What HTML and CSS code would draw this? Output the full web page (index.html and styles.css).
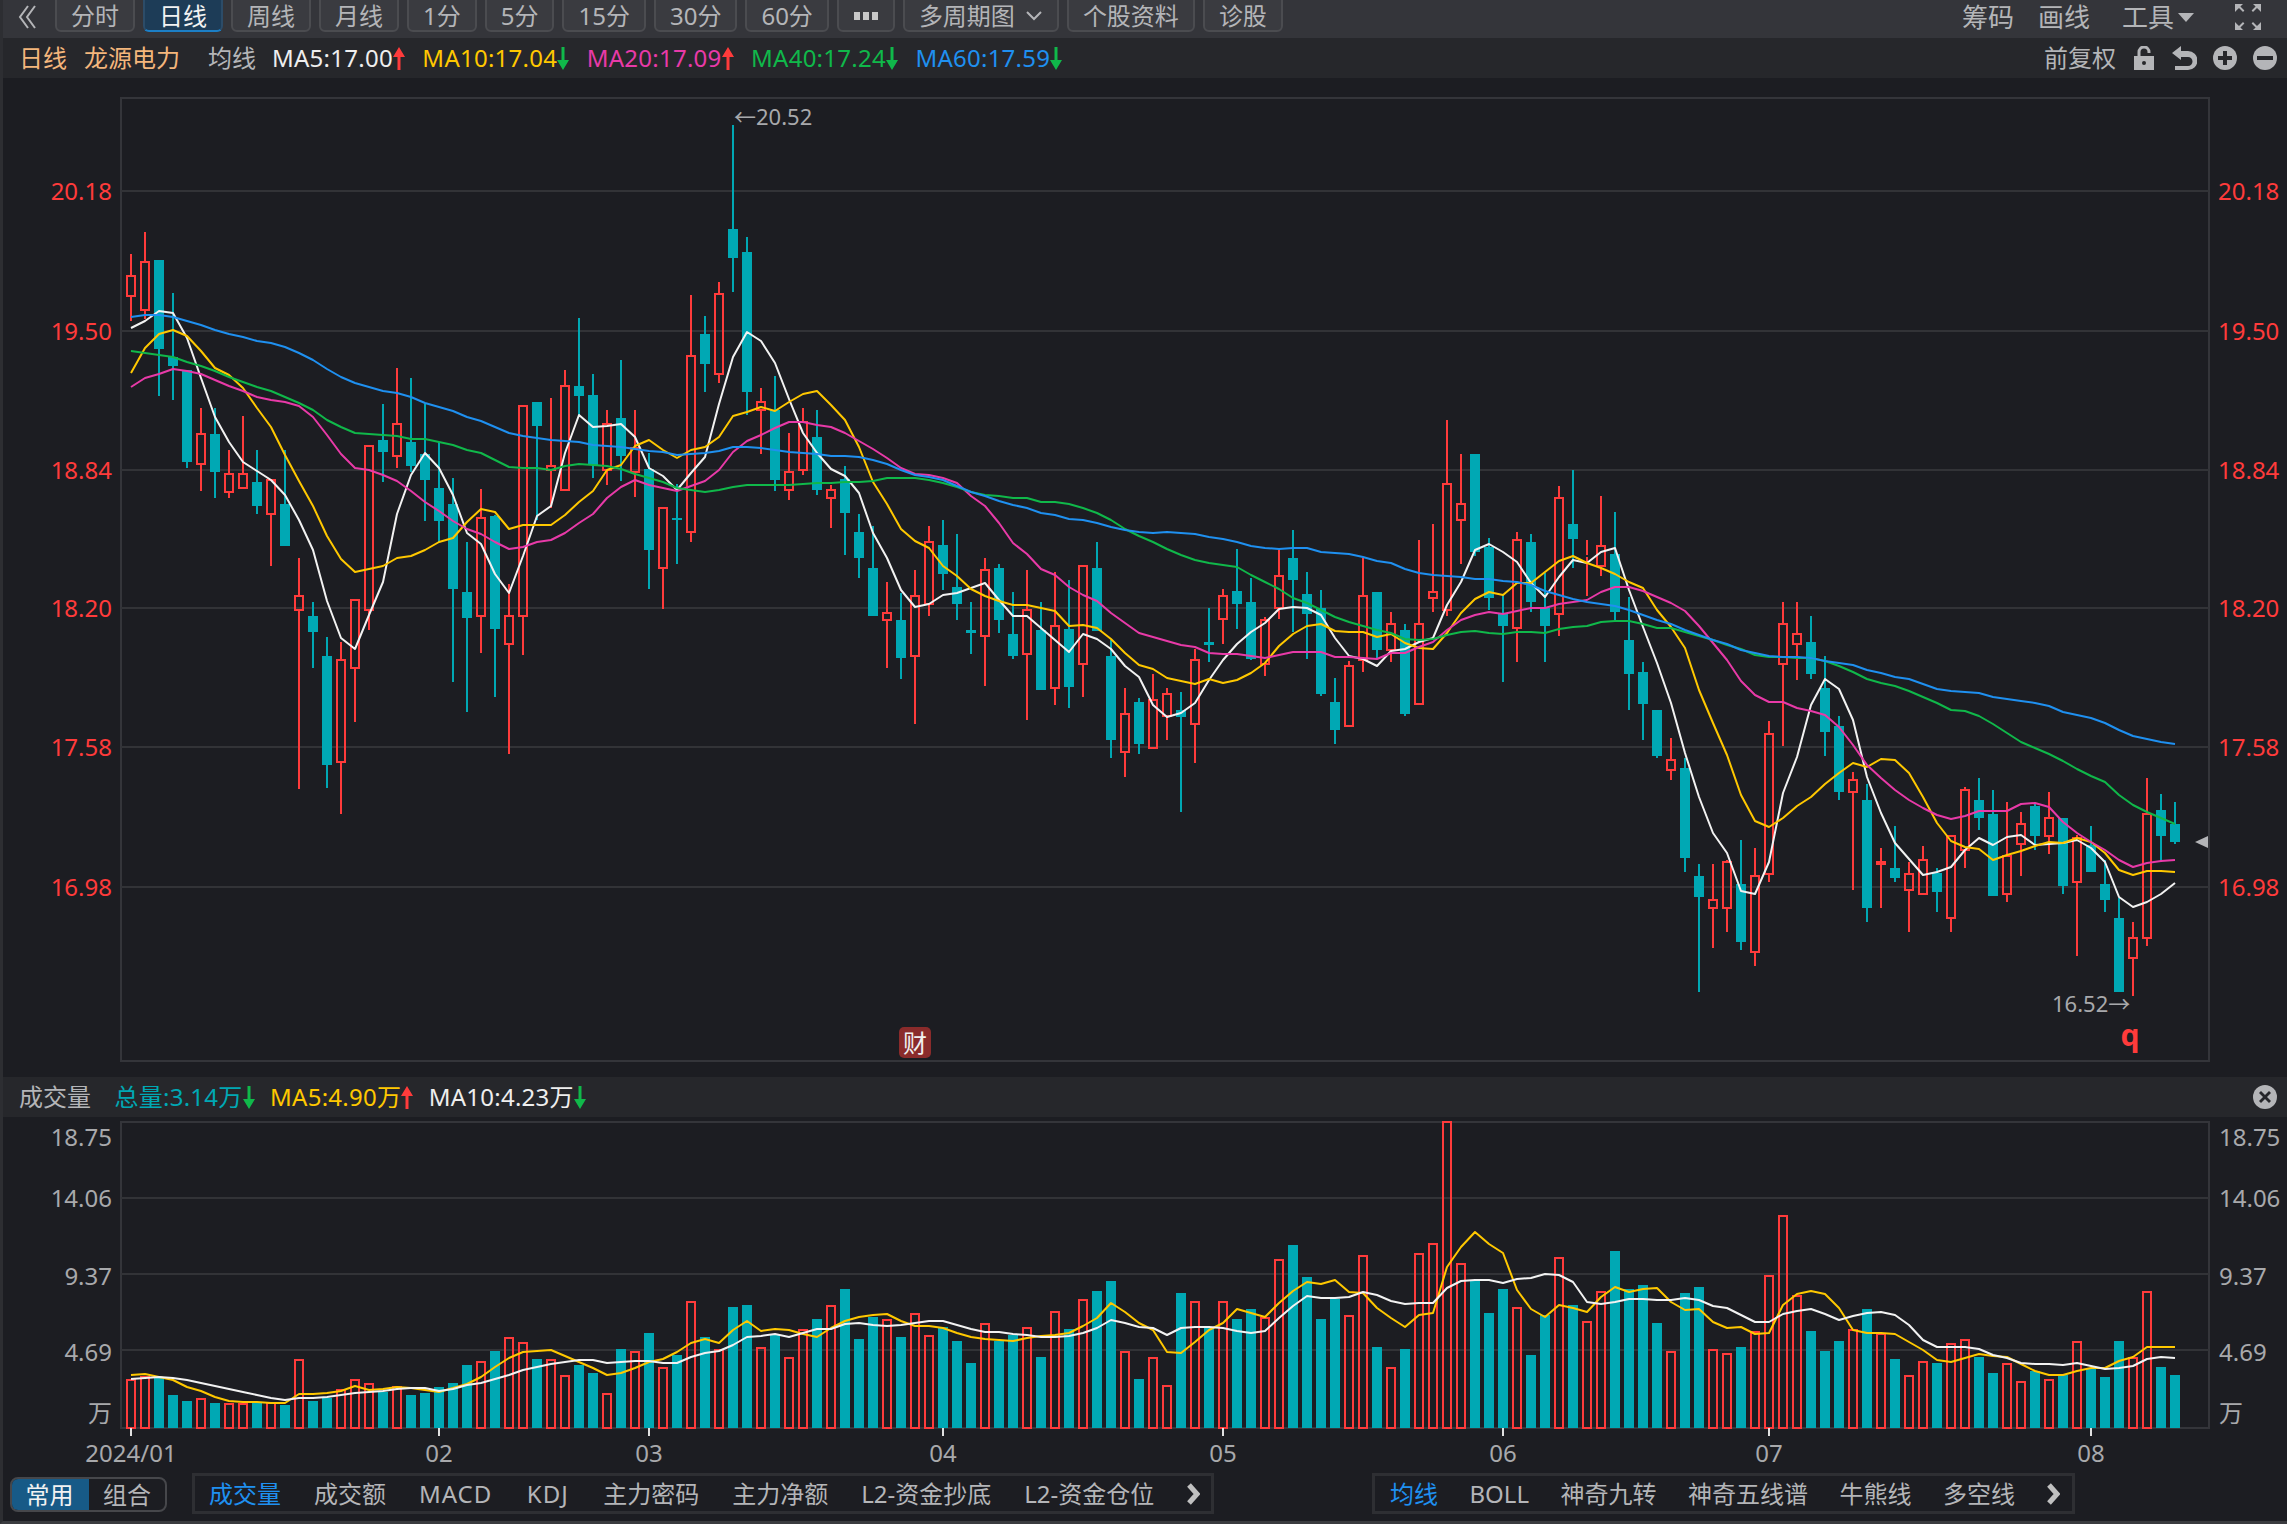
FILE: index.html
```html
<!DOCTYPE html>
<html lang="zh-CN">
  <head>
    <meta charset="UTF-8" />
    <title>龙源电力 日线</title>
    <link rel="stylesheet" href="styles.css">
  </head>
  <body>
    <div class="app">
      <div class="toolbar">
        <svg class="back-icon" viewBox="0 0 20 26">
          <polyline points="10,2 2,13 10,24" />
          <polyline points="17,2 9,13 17,24" />
        </svg>
        <button class="tool-btn">分时</button>
        <button class="tool-btn active">日线</button>
        <button class="tool-btn">周线</button>
        <button class="tool-btn">月线</button>
        <button class="tool-btn">1分</button>
        <button class="tool-btn">5分</button>
        <button class="tool-btn">15分</button>
        <button class="tool-btn">30分</button>
        <button class="tool-btn">60分</button>
        <button class="tool-btn more-btn">
          <svg class="more-icon" viewBox="0 0 24 8">
            <rect x="0" y="0" width="6" height="8" />
            <rect x="9" y="0" width="6" height="8" />
            <rect x="18" y="0" width="6" height="8" />
          </svg>
        </button>
        <button class="tool-btn">
          多周期图
          <svg class="chevron-down" viewBox="0 0 18 12"><polyline points="2,2 9,9 16,2" /></svg>
        </button>
        <button class="tool-btn">个股资料</button>
        <button class="tool-btn">诊股</button>
        <div class="toolbar-right">
          <span class="top-link link-chip">筹码</span>
          <span class="top-link link-draw">画线</span>
          <span class="top-link">工具<i class="caret"></i></span>
          <svg class="fullscreen-icon" viewBox="0 0 28 28">
            <path d="M1 1h8L6.400 3.600l4 4L9 9 5 5 2.400 7.600 1 9zM27 1h-8l2.600 2.600-4 4L19 9l4-4 2.600 2.600L27 9zM1 27h8l-2.600-2.600 4-4L9 19l-4 4-2.600-2.600L1 19zM27 27h-8l2.600-2.600-4-4L19 19l4 4 2.600-2.600L27 19z" />
          </svg>
        </div>
      </div>

      <div class="legend">
        <span class="c-orange first-item">日线</span>
        <span class="c-orange">龙源电力</span>
        <span class="c-grey gap-wide">均线</span>
        <span class="ma-item c-white">MA5:17.00<svg class="arrow up" viewBox="0 0 12 23"><path d="M6 0l6 10H7.500v13h-3V10H0z" /></svg></span>
        <span class="ma-item c-yellow">MA10:17.04<svg class="arrow down" viewBox="0 0 12 23"><path d="M6 23l6-10H7.500V0h-3v13H0z" /></svg></span>
        <span class="ma-item c-pink">MA20:17.09<svg class="arrow up" viewBox="0 0 12 23"><path d="M6 0l6 10H7.500v13h-3V10H0z" /></svg></span>
        <span class="ma-item c-green">MA40:17.24<svg class="arrow down" viewBox="0 0 12 23"><path d="M6 23l6-10H7.500V0h-3v13H0z" /></svg></span>
        <span class="ma-item c-blue">MA60:17.59<svg class="arrow down" viewBox="0 0 12 23"><path d="M6 23l6-10H7.500V0h-3v13H0z" /></svg></span>
        <div class="legend-right">
          <span class="c-grey">前复权</span>
          <svg class="tool-icon lock" viewBox="0 0 20 24">
            <path d="M0 10h20v14H0zM3.500 10V6a6.500 6.500 0 0 1 13 0v1h-3V6a3.500 3.500 0 0 0-7 0v4z" />
            <circle class="hole" cx="10" cy="17" r="2" />
          </svg>
          <svg class="tool-icon undo" viewBox="0 0 25 24">
            <path d="M0 7l9-7v5h7a8.500 8.500 0 0 1 0 19H3v-4h13a4.500 4.500 0 0 0 0-9H9v3z" />
          </svg>
          <svg class="tool-icon round" viewBox="0 0 24 24">
            <circle cx="12" cy="12" r="12" />
            <rect class="hole" x="5" y="10" width="14" height="4" />
            <rect class="hole" x="10" y="5" width="4" height="14" />
          </svg>
          <svg class="tool-icon round" viewBox="0 0 24 24">
            <circle cx="12" cy="12" r="12" />
            <rect class="hole" x="4" y="10" width="16" height="4" />
          </svg>
        </div>
      </div>

      <svg class="price-chart" id="priceChart" viewBox="3 78 2284 999"></svg>

      <div class="legend vol-legend">
        <span class="c-grey vol-title">成交量</span>
        <span class="ma-item c-teal">总量:3.14万<svg class="arrow down" viewBox="0 0 12 23"><path d="M6 23l6-10H7.500V0h-3v13H0z" /></svg></span>
        <span class="ma-item c-yellow">MA5:4.90万<svg class="arrow up" viewBox="0 0 12 23"><path d="M6 0l6 10H7.500v13h-3V10H0z" /></svg></span>
        <span class="ma-item c-white">MA10:4.23万<svg class="arrow down" viewBox="0 0 12 23"><path d="M6 23l6-10H7.500V0h-3v13H0z" /></svg></span>
        <div class="legend-right">
          <svg class="tool-icon round close" viewBox="0 0 24 24">
            <circle cx="12" cy="12" r="12" />
            <path class="hole" d="M8 6l4 4 4-4 2 2-4 4 4 4-2 2-4-4-4 4-2-2 4-4-4-4z" />
          </svg>
        </div>
      </div>

      <svg class="vol-chart" id="volChart" viewBox="3 1117 2284 351"></svg>

      <div class="tabs">
        <div class="switch">
          <span class="switch-on">常用</span>
          <span class="switch-off">组合</span>
        </div>
        <div class="tab-group group-indicators">
          <span class="tab active">成交量</span>
          <span class="tab">成交额</span>
          <span class="tab tab-latin">MACD</span>
          <span class="tab tab-latin">KDJ</span>
          <span class="tab">主力密码</span>
          <span class="tab">主力净额</span>
          <span class="tab">L2-资金抄底</span>
          <span class="tab">L2-资金仓位</span>
          <svg class="chevron" viewBox="0 0 13 22"><polyline points="2,2 10,11 2,20" /></svg>
        </div>
        <div class="tab-group group-overlays">
          <span class="tab active">均线</span>
          <span class="tab">BOLL</span>
          <span class="tab">神奇九转</span>
          <span class="tab">神奇五线谱</span>
          <span class="tab">牛熊线</span>
          <span class="tab">多空线</span>
          <svg class="chevron" viewBox="0 0 13 22"><polyline points="2,2 10,11 2,20" /></svg>
        </div>
      </div>
    </div>
    <script src="chart.js"></script>
  </body>
</html>
```

FILE: styles.css
```css
* {
  margin: 0;
  padding: 0;
  box-sizing: border-box;
}

body {
  width: 2287px;
  height: 1524px;
  overflow: hidden;
  background-color: #1c1d22;
  font-family: "Noto Sans", "Noto Sans CJK SC", sans-serif;
  font-size: 24px;
  color: #b4b5b8;
}

.app {
  width: 2287px;
  height: 1524px;
  border-left: 3px solid #2d2e32;
  border-bottom: 3px solid #3a3b3f;
}

/* top bar */
.toolbar {
  display: flex;
  align-items: flex-start;
  gap: 8px;
  height: 38px;
  overflow: hidden;
  padding-left: 15px;
  background-color: #34353a;
}

.back-icon {
  width: 20px;
  height: 26px;
  margin: 4px 9px 0 0;
}

.back-icon polyline {
  fill: none;
  stroke: #b4b5b8;
  stroke-width: 2;
}

.tool-btn {
  display: flex;
  align-items: center;
  justify-content: center;
  gap: 10px;
  height: 38px;
  margin-top: -6px;
  padding: 6px 14px 0;
  border: 2px solid #4b4c50;
  border-radius: 6px;
  background-color: #3a3b40;
  color: #b4b5b8;
  font-family: inherit;
  font-size: 24px;
  line-height: 1;
}

.tool-btn.active {
  background-color: #1d3c57;
  border-color: #2c4c68;
  border-bottom-color: #1c7fc6;
  color: #f2f2f2;
}

.more-btn {
  width: 58px;
}

.more-icon {
  width: 24px;
  height: 8px;
  fill: #c8c8c8;
}

.chevron-down {
  width: 18px;
  height: 12px;
  fill: none;
  stroke: #b4b5b8;
  stroke-width: 2;
}

.toolbar-right {
  display: flex;
  align-items: center;
  height: 34px;
  margin-left: auto;
  padding-right: 25px;
}

.top-link {
  display: flex;
  align-items: center;
  font-size: 26px;
  line-height: 34px;
}

.link-chip {
  margin-right: 24px;
}

.link-draw {
  margin-right: 32px;
}

.caret {
  width: 0;
  height: 0;
  margin-left: 4px;
  border-left: 8px solid transparent;
  border-right: 8px solid transparent;
  border-top: 9px solid #b4b5b8;
}

.fullscreen-icon {
  width: 28px;
  height: 28px;
  margin-left: 40px;
  fill: #b4b5b8;
}

/* indicator line */
.legend {
  display: flex;
  align-items: center;
  gap: 14px;
  height: 40px;
  padding-left: 16px;
  background-color: #26272b;
  line-height: 40px;
  white-space: nowrap;
}

.first-item {
  margin-right: 3px;
}

.gap-wide {
  margin: 0 2px 0 14px;
}

.ma-item {
  display: flex;
  align-items: center;
  margin-right: 3.5px;
  letter-spacing: 0.25px;
}

.vol-legend .ma-item {
  margin-right: 1.5px;
}

.arrow {
  width: 12px;
  height: 23px;
}

.arrow.up {
  fill: #ff3b3b;
}

.arrow.down {
  fill: #10b84a;
}

.legend-right {
  display: flex;
  align-items: center;
  margin-left: auto;
  padding-right: 10px;
}

.tool-icon {
  height: 24px;
  fill: #b4b5b8;
}

.tool-icon .hole {
  fill: #26272b;
}

.lock {
  width: 20px;
  margin-left: 18px;
}

.undo {
  width: 25px;
  margin-left: 18px;
}

.round {
  width: 24px;
  margin-left: 16px;
}

.c-orange {
  color: #f4b67c;
}

.c-grey {
  color: #b4b5b8;
}

.c-white {
  color: #eeeeee;
}

.c-yellow {
  color: #ffc800;
}

.c-pink {
  color: #e83aa8;
}

.c-green {
  color: #10b84a;
}

.c-blue {
  color: #1f90f0;
}

.c-teal {
  color: #00a8b4;
}

.vol-title {
  width: 81.5px;
}

/* charts */
.price-chart {
  display: block;
  width: 2284px;
  height: 999px;
}

.vol-chart {
  display: block;
  width: 2284px;
  height: 351px;
}

.frame {
  fill: none;
  stroke: #34353a;
  stroke-width: 2;
}

.grid-line {
  stroke: #323337;
  stroke-width: 2;
}

.wick {
  stroke-width: 2;
}

.wick.up {
  stroke: #ff3b3b;
}

.wick.down {
  stroke: #00a8b4;
}

.body-up {
  fill: none;
  stroke: #ff3b3b;
  stroke-width: 2;
}

.body-down {
  fill: #00a8b4;
}

.ma-line {
  fill: none;
  stroke-width: 2;
  stroke-linejoin: round;
}

.ma-5 {
  stroke: #f2f2f2;
}

.ma-10 {
  stroke: #ffc800;
}

.ma-20 {
  stroke: #e83aa8;
}

.ma-40 {
  stroke: #10b84a;
}

.ma-60 {
  stroke: #1f90f0;
}

.axis-price {
  fill: #ff3b3b;
  font-size: 24px;
  dominant-baseline: central;
}

.axis-vol {
  fill: #a8a9ac;
  font-size: 24px;
  dominant-baseline: central;
}

.axis-date {
  fill: #a8a9ac;
  font-size: 24px;
  text-anchor: middle;
  dominant-baseline: central;
}

.tick {
  stroke: #e0e0e0;
  stroke-width: 2;
}

.extreme-label {
  fill: #a8a9ac;
  font-size: 22px;
  dominant-baseline: central;
}

.q-mark {
  fill: #ff3b3b;
  font-size: 30px;
  font-weight: bold;
  text-anchor: middle;
}

.last-marker {
  fill: #b4b5b8;
}

.badge-bg {
  fill: #8a2b2b;
}

.badge-text {
  fill: #f0f0f0;
  font-size: 24px;
  text-anchor: middle;
  dominant-baseline: central;
}

/* bottom tabs */
.tabs {
  display: flex;
  align-items: flex-start;
  height: 53px;
  padding: 5px 0 0 7px;
}

.switch {
  display: flex;
  width: 157px;
  height: 35px;
  margin-top: 4px;
  border: 2px solid #46474b;
  border-radius: 8px;
  overflow: hidden;
  line-height: 31px;
}

.switch-on {
  width: 79px;
  margin: -2px 0 -2px -2px;
  background-color: #175a87;
  color: #f2f2f2;
  line-height: 35px;
  text-align: center;
}

.switch-off {
  flex: 1;
  text-align: center;
}

.tab-group {
  display: flex;
  align-items: center;
  height: 41px;
  border: 3px solid #2e2f33;
  line-height: 35px;
  white-space: nowrap;
}

.group-indicators {
  gap: 33px;
  width: 1022px;
  margin-left: 25px;
  padding-left: 14px;
}

.group-overlays {
  gap: 31.5px;
  width: 703px;
  margin-left: 158px;
  padding-left: 15px;
}

.tab.active {
  color: #1f90f0;
}

.tab-latin {
  margin-right: 1.5px;
  letter-spacing: 1px;
}

.chevron {
  flex-shrink: 0;
  width: 13px;
  height: 22px;
  margin-left: auto;
  margin-right: 14px;
  fill: none;
  stroke: #c0c0c0;
  stroke-width: 5;
}
```

FILE: chart.js
```js
const SVG_NS = "http://www.w3.org/2000/svg";

// high, body top, body bottom, low, up(1)/down(0) - all in page pixels
const candles = [
  [254,275,297,321,1],[232,261,311,319,1],[260,260,349,396,0],[293,357,366,400,0],[370,370,462,468,0],
  [408,433,465,491,1],[408,434,472,498,0],[450,473,493,498,1],[416,473,489,489,1],[450,482,506,514,0],
  [479,479,515,566,1],[450,504,546,546,0],[558,595,611,789,1],[602,616,632,668,0],[637,656,765,788,0],
  [642,659,763,814,1],[599,599,669,722,1],[445,445,611,630,1],[404,440,452,482,0],[368,423,457,468,1],
  [378,442,466,472,0],[404,454,480,521,0],[442,488,521,542,0],[478,504,589,682,0],[542,592,618,712,0],
  [489,517,617,653,1],[515,516,629,697,0],[584,615,645,754,1],[405,405,617,655,1],[402,402,426,520,0],
  [398,465,471,508,1],[370,385,491,491,1],[318,386,396,415,0],[374,395,465,478,0],[410,423,471,485,1],
  [360,418,456,481,0],[410,447,473,497,1],[453,469,550,589,0],[507,507,569,609,1],[484,518,520,564,0],
  [295,355,533,542,1],[316,334,364,392,0],[282,293,375,383,1],[125,229,258,292,0],[237,252,392,415,0],
  [388,401,411,454,1],[376,410,480,491,0],[433,471,491,500,1],[408,421,471,475,1],[410,437,490,495,0],
  [485,489,499,528,1],[466,479,513,555,0],[514,532,558,578,0],[526,568,616,616,0],[582,612,621,668,1],
  [593,620,658,679,0],[570,595,657,724,1],[526,541,605,616,1],[520,545,574,590,0],[534,587,604,620,0],
  [602,630,633,654,0],[558,569,637,686,1],[564,568,620,633,0],[592,634,656,659,0],[570,609,655,720,1],
  [602,630,690,690,0],[572,625,689,705,1],[580,629,687,708,0],[565,565,665,697,1],[542,568,631,631,0],
  [640,656,740,758,0],[688,713,753,777,1],[698,702,744,754,0],[674,699,749,749,1],[688,693,717,740,1],
  [692,710,717,812,0],[649,659,725,763,1],[608,642,645,662,0],[589,595,620,644,1],[549,591,604,629,0],
  [578,602,659,660,0],[617,619,665,676,1],[550,575,609,619,1],[530,558,580,632,0],[572,594,614,659,0],
  [590,608,694,696,0],[678,702,730,744,0],[661,665,727,727,1],[558,595,661,672,1],[592,592,650,658,0],
  [612,623,651,662,1],[624,630,714,716,0],[540,623,705,705,1],[524,591,599,612,1],[420,483,611,616,1],
  [454,503,521,564,1],[454,454,552,556,0],[538,547,598,610,0],[595,613,626,682,0],[532,539,629,662,1],
  [534,542,602,612,0],[573,608,626,662,0],[486,497,615,636,1],[470,524,539,568,0],[540,555,557,596,1],
  [496,545,567,576,1],[512,554,612,620,0],[597,640,674,710,0],[662,672,704,740,0],[710,710,756,758,0],
  [738,759,771,780,1],[758,768,858,872,0],[864,876,897,992,0],[864,899,909,948,1],[860,861,909,932,1],
  [840,884,942,950,0],[848,875,953,966,1],[721,733,875,882,1],[602,623,665,746,1],[602,633,645,680,1],
  [616,642,674,679,0],[656,688,732,756,0],[716,726,792,800,0],[772,779,793,890,1],[784,800,908,922,0],
  [848,861,865,908,1],[826,868,878,882,0],[862,873,891,932,1],[846,859,895,895,1],[868,873,892,912,0],
  [835,835,919,932,1],[787,789,851,868,1],[778,800,818,830,0],[790,814,896,896,0],[802,855,895,902,1],
  [812,823,845,876,1],[803,806,836,850,0],[792,817,837,854,1],[818,818,886,894,0],[835,837,883,956,1],
  [826,845,872,872,0],[860,884,900,912,0],[898,918,992,992,0],[922,937,959,996,1],[778,813,939,946,1],
  [794,810,836,861,0],[802,824,842,844,0]
];

const priceMA = {
  5: [328,321,311,313,338,378,417,442,462,471,480,495,520,550,601,638,649,615,582,514,475,453,468,495,533,544,574,593,556,516,506,453,415,427,426,424,437,468,476,490,
      473,457,404,357,332,341,363,399,433,453,469,476,493,533,558,590,607,604,595,593,588,583,600,616,616,628,640,652,634,639,649,666,677,705,717,713,703,680,660,644,
      632,623,609,607,608,615,638,656,659,666,651,649,642,638,605,582,550,544,552,562,583,597,577,560,563,552,548,590,627,663,703,753,797,833,853,891,894,
      862,793,757,705,679,689,720,777,813,843,859,875,872,867,850,838,845,837,835,845,844,843,840,848,862,897,907,902,894,883],
  10: [373,348,334,330,336,351,368,375,388,408,427,455,481,506,536,559,572,569,566,558,556,550,542,538,522,509,512,529,525,525,525,515,502,491,470,465,446,440,450,458,
       450,447,437,416,412,407,411,402,394,391,405,420,447,482,504,529,541,548,566,576,589,596,601,605,605,608,611,626,625,628,639,653,665,669,678,681,684,679,683,680,
       673,663,646,634,626,624,631,632,632,637,634,643,648,649,633,613,599,592,595,583,583,572,561,556,563,568,574,582,588,610,627,648,690,723,755,795,821,
       827,818,806,797,784,773,763,767,759,760,773,797,823,841,847,849,860,855,851,846,842,843,838,842,853,870,875,871,871,872],
  20: [387,378,374,369,371,374,380,386,391,397,400,402,406,417,435,454,468,470,475,481,491,502,511,521,529,534,542,549,547,542,540,533,523,514,498,487,480,485,488,491,
       486,481,470,452,441,435,428,422,422,425,427,433,441,449,458,468,474,475,478,483,496,506,523,543,554,569,575,587,595,601,613,623,633,637,641,645,647,653,654,654,
       656,658,655,652,652,652,657,657,658,659,653,653,647,642,630,620,615,612,614,611,608,608,604,602,600,592,587,587,591,597,603,611,626,643,660,681,695,
       702,702,708,711,715,727,745,765,778,790,800,808,815,819,816,811,811,811,804,803,807,822,833,842,850,860,867,863,861,860],
  40: [351,353,355,357,362,366,371,377,382,387,391,397,403,410,420,427,433,434,435,436,439,439,442,445,450,453,460,467,468,468,470,466,464,465,466,469,474,478,482,488,
       490,492,490,487,485,485,485,485,484,483,483,482,482,481,478,478,478,480,483,487,492,495,496,498,498,502,502,504,508,513,520,529,536,542,549,555,560,563,565,567,
       575,582,589,598,603,610,617,622,626,630,633,639,640,639,635,632,631,633,634,632,632,633,629,627,626,622,621,621,624,628,628,632,636,640,645,649,655,
       657,657,658,658,661,666,672,679,683,686,691,697,703,710,711,716,724,733,742,748,754,761,769,776,782,795,805,812,818,824],
  60: [317,315,315,317,321,325,330,334,337,341,343,347,353,360,369,377,383,387,391,393,397,403,407,411,417,421,427,433,436,438,440,441,442,445,446,447,449,451,452,455,
       454,453,451,447,447,448,450,452,453,454,456,456,457,460,464,470,475,477,480,486,492,496,501,505,508,513,515,519,520,523,527,530,532,533,532,533,534,537,539,542,
       546,548,549,548,548,552,553,554,557,561,563,569,573,575,576,577,579,579,581,582,585,591,595,599,602,604,606,610,615,620,624,630,635,640,644,650,653,
       656,657,657,658,661,663,665,670,673,677,679,684,689,691,692,693,697,699,701,703,706,712,715,718,723,730,736,739,742,744]
};

// top of each volume bar
const volumes = [
  1379,1376,1378,1395,1401,1398,1403,1403,1403,1402,1402,1405,1359,1401,1398,1389,1379,1383,1392,1386,
  1395,1393,1387,1383,1365,1361,1351,1337,1342,1359,1359,1375,1365,1373,1393,1349,1351,1333,1367,1355,
  1301,1337,1349,1307,1305,1347,1334,1357,1329,1319,1305,1289,1339,1317,1319,1337,1313,1335,1327,1341,
  1363,1323,1341,1335,1327,1357,1311,1329,1299,1291,1281,1351,1379,1357,1385,1293,1301,1327,1301,1319,
  1309,1317,1259,1245,1277,1319,1299,1315,1255,1347,1367,1349,1253,1243,1121,1263,1280,1313,1289,1307,
  1355,1315,1257,1305,1321,1291,1251,1289,1285,1323,1351,1293,1287,1349,1353,1347,1331,1275,1215,1295,
  1331,1351,1341,1329,1309,1333,1359,1375,1361,1363,1343,1339,1357,1373,1363,1381,1371,1379,1375,1341,
  1369,1377,1341,1357,1291,1367,1375
];

const volumeMA = {
  5: [1375,1374,1377,1380,1387,1391,1397,1401,1402,1402,1403,1403,1394,1394,1393,1391,1386,1390,1389,1387,1388,1390,1392,1388,1384,1377,1367,1358,1352,1351,1350,1356,1362,1368,1375,1373,1368,1362,1359,1352,
      1343,1339,1343,1330,1321,1331,1329,1330,1334,1337,1328,1321,1317,1315,1314,1321,1326,1326,1328,1333,1337,1339,1340,1341,1338,1336,1335,1333,1326,1318,1303,1312,1323,
      1330,1352,1353,1342,1330,1323,1309,1313,1317,1303,1291,1282,1284,1280,1292,1293,1308,1318,1327,1315,1313,1267,1247,1232,1244,1253,1290,1309,1317,1305,1308,1312,1297,1287,1292,1289,1288,1302,1310,1309,
      1322,1328,1327,1334,1333,1305,1294,1291,1294,1308,1330,1333,1333,1334,1342,1350,1360,1362,1358,1354,1356,1357,1364,1371,1375,1375,1371,1368,1368,1361,1357,1347,1347,1347],
  10: [1379,1378,1377,1378,1380,1383,1386,1389,1392,1395,1398,1400,1398,1398,1397,1395,1393,1392,1391,1389,1388,1388,1391,1389,1385,1383,1379,1375,1370,1367,1364,1362,1360,1360,1363,1362,1361,1361,1363,1363,
       1357,1353,1351,1345,1337,1336,1334,1337,1333,1329,1329,1324,1323,1325,1326,1325,1323,1321,1321,1325,1329,1332,1332,1334,1335,1337,1337,1336,1333,1328,1320,1323,1327,
       1328,1335,1328,1327,1327,1328,1331,1333,1331,1318,1306,1296,1298,1298,1297,1292,1295,1301,1304,1303,1303,1288,1281,1280,1280,1283,1279,1278,1274,1275,1282,1302,1304,1302,1299,1299,1300,1300,1298,1300,
       1306,1308,1315,1322,1322,1314,1311,1309,1314,1320,1316,1313,1312,1315,1325,1340,1347,1347,1347,1349,1355,1358,1363,1364,1364,1365,1363,1366,1369,1368,1366,1359,1357,1358]
};

const priceTicks = [[191, "20.18"], [331, "19.50"], [470, "18.84"], [608, "18.20"], [747, "17.58"], [887, "16.98"]];
const volTicks = [[1136, "18.75"], [1197, "14.06"], [1275, "9.37"], [1351, "4.69"], [1412, "万"]];
const volGrid = [1198, 1274, 1350];
const months = [[0, "2024/01"], [22, "02"], [37, "03"], [58, "04"], [78, "05"], [98, "06"], [117, "07"], [140, "08"]];

const LEFT = 121;
const RIGHT = 2209;

function xOf(i) {
  return 131 + 14 * i;
}

function add(parent, tag, attrs, text) {
  const node = document.createElementNS(SVG_NS, tag);
  for (const key in attrs) {
    node.setAttribute(key, attrs[key]);
  }
  if (text) node.textContent = text;
  parent.appendChild(node);
  return node;
}

function addLine(parent, x1, y1, x2, y2, cls) {
  if (y1 === y2 && x1 === x2) return;
  add(parent, "line", { x1, y1, x2, y2, class: cls });
}

function addMA(parent, period, points) {
  const coords = points.map((y, i) => xOf(i) + "," + y).join(" ");
  add(parent, "polyline", { points: coords, class: "ma-line ma-" + period });
}

function drawCandle(parent, c, i) {
  const x = xOf(i);
  const [high, top, bottom, low, up] = c;
  const cls = "wick " + (up ? "up" : "down");
  addLine(parent, x, high, x, top, cls);
  addLine(parent, x, bottom, x, low, cls);
  if (up) {
    add(parent, "rect", { x: x - 4, y: top + 1, width: 8, height: bottom - top - 2, class: "body-up" });
  } else {
    add(parent, "rect", { x: x - 5, y: top, width: 10, height: bottom - top, class: "body-down" });
  }
}

function drawPriceChart() {
  const svg = document.getElementById("priceChart");
  add(svg, "rect", { x: LEFT, y: 98, width: RIGHT - LEFT, height: 963, class: "frame" });

  priceTicks.forEach(([y, label]) => {
    addLine(svg, LEFT, y, RIGHT, y, "grid-line");
    add(svg, "text", { x: 112, y: y - 1, "text-anchor": "end", class: "axis-price" }, label);
    add(svg, "text", { x: 2218, y: y - 1, class: "axis-price" }, label);
  });

  candles.forEach((c, i) => drawCandle(svg, c, i));
  [5, 10, 20, 40, 60].forEach((p) => addMA(svg, p, priceMA[p]));

  add(svg, "text", { x: 734, y: 116, class: "extreme-label" }, "←20.52");
  add(svg, "text", { x: 2052, y: 1003, class: "extreme-label" }, "16.52→");
  add(svg, "text", { x: 2130, y: 1046, class: "q-mark" }, "q");
  add(svg, "polygon", { points: "2195,842 2208,836 2208,848", class: "last-marker" });
  add(svg, "rect", { x: 899, y: 1027, width: 32, height: 31, rx: 5, class: "badge-bg" });
  add(svg, "text", { x: 915, y: 1042, class: "badge-text" }, "财");
}

function drawVolChart() {
  const svg = document.getElementById("volChart");
  add(svg, "rect", { x: LEFT, y: 1122, width: RIGHT - LEFT, height: 306, class: "frame" });

  volGrid.forEach((y) => addLine(svg, LEFT, y, RIGHT, y, "grid-line"));
  volTicks.forEach(([y, label]) => {
    add(svg, "text", { x: 112, y, "text-anchor": "end", class: "axis-vol" }, label);
    add(svg, "text", { x: 2219, y, class: "axis-vol" }, label);
  });

  volumes.forEach((top, i) => {
    const x = xOf(i);
    if (candles[i][4]) {
      add(svg, "rect", { x: x - 4, y: top + 1, width: 8, height: 1427 - top, class: "body-up" });
    } else {
      add(svg, "rect", { x: x - 5, y: top, width: 10, height: 1428 - top, class: "body-down" });
    }
  });

  addMA(svg, 10, volumeMA[5]);
  addMA(svg, 5, volumeMA[10]);

  months.forEach(([i, label]) => {
    addLine(svg, xOf(i), 1428, xOf(i), 1436, "tick");
    add(svg, "text", { x: xOf(i), y: 1452, class: "axis-date" }, label);
  });
}

drawPriceChart();
drawVolChart();
```
